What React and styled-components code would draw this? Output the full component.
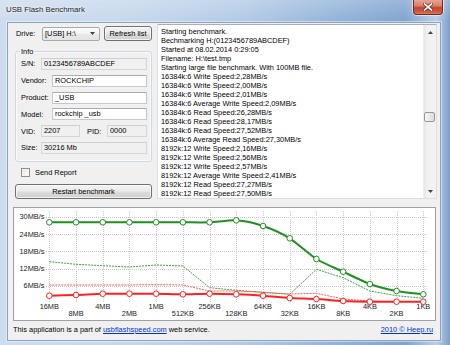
import React from 'react';
import styled, { createGlobalStyle } from 'styled-components';

const FONT = `"Liberation Sans", Arial, sans-serif`;

const Global = createGlobalStyle`
  html, body { margin: 0; padding: 0; width: 450px; height: 345px; overflow: hidden; background: #fff; }
  #root { width: 450px; height: 345px; }
`;

const Window = styled.div`
  width: 450px;
  height: 345px;
  box-sizing: border-box;
  display: flex;
  flex-direction: column;
  font-family: ${FONT};
  color: #000;
  background:
    linear-gradient(180deg, rgba(255,255,255,0.22) 0px, rgba(255,255,255,0) 22px),
    linear-gradient(90deg, #cddcee 0%, #c4d7ec 30%, #b0c9e5 55%, #8eafd7 78%, #7fa3cf 90%, #b9cfe8 97%, #7d9ecb 100%);
`;

const TitleBar = styled.div`
  height: 22px;
  flex: none;
  display: flex;
  align-items: flex-start;
  padding: 0 7px 0 6px;
`;

const Title = styled.div`
  margin-top: 5px;
  font-size: 7.8px;
  line-height: 10px;
  color: #1b1b1b;
  text-shadow: 0 0 5px rgba(255,255,255,0.95), 0 0 2px rgba(255,255,255,0.9);
`;

const CloseButton = styled.div`
  margin-left: auto;
  width: 30px;
  height: 15px;
  box-sizing: border-box;
  border: 1px solid #6d2b24;
  border-top: none;
  border-radius: 0 0 4px 4px;
  background: linear-gradient(180deg, #e8a494 0%, #d98170 40%, #c5452f 55%, #cf5b41 85%, #dd7b5f 100%);
  box-shadow: 0 0 0 1px rgba(255,255,255,0.55);
  display: flex;
  align-items: center;
  justify-content: center;
`;

const Client = styled.div`
  flex: 1;
  min-height: 0;
  margin: 0 9px 4px 7px;
  background: #f0f0f0;
  border: 1px solid #8aa1bf;
  box-shadow: 0 0 0 1px rgba(255,255,255,0.45);
  display: flex;
  flex-direction: column;
  font-size: 7.4px;
`;

const TopSection = styled.div`
  display: flex;
  gap: 5px;
  padding: 1px 3px 0 7px;
  height: 175px;
  flex: none;
`;

const LeftCol = styled.div`
  width: 137px;
  flex: none;
  display: flex;
  flex-direction: column;
`;

const DriveRow = styled.div`
  display: flex;
  align-items: center;
  height: 16px;
  margin-top: 2px;
`;

const DriveLabel = styled.span`
  width: 27px;
  padding-left: 1px;
  box-sizing: border-box;
  flex: none;
`;

const Combo = styled.div`
  width: 58px;
  height: 14px;
  box-sizing: border-box;
  flex: none;
  border: 1px solid #a9a9a9;
  border-radius: 2px;
  background: linear-gradient(180deg, #fcfcfc 0%, #f2f2f2 50%, #e9e9e9 51%, #e4e4e4 100%);
  display: flex;
  align-items: center;
  padding: 0 4px 0 2px;
  justify-content: space-between;
`;

const WinButton = styled.div`
  width: ${p => p.$w}px;
  height: 15px;
  box-sizing: border-box;
  flex: none;
  margin-left: ${p => p.$ml || 0}px;
  margin-top: ${p => p.$mt || 0}px;
  border: 1px solid #707070;
  border-radius: 3px;
  background: linear-gradient(180deg, #f2f2f2 0%, #ebebeb 48%, #dddddd 52%, #cfcfcf 100%);
  box-shadow: inset 0 0 0 1px rgba(255,255,255,0.7);
  display: flex;
  align-items: center;
  justify-content: center;
`;

const GroupBox = styled.fieldset`
  margin: 6px 0 0 0;
  padding: 0 4px 5px 5px;
  border: 1px solid #d0d7de;
  border-radius: 3px;
  box-shadow: inset 0 0 0 1px rgba(255,255,255,0.7);
  min-width: 0;
`;

const Legend = styled.legend`
  padding: 0 1px;
  margin-left: -1px;
  line-height: 8px;
  font-size: 7.4px;
`;

const InfoRow = styled.div`
  display: flex;
  align-items: center;
  height: 16.8px;
`;

const FieldLabel = styled.span`
  width: ${p => p.$w}px;
  margin-left: ${p => p.$ml || 0}px;
  flex: none;
`;

const Field = styled.div`
  width: ${p => p.$w}px;
  height: 12px;
  box-sizing: border-box;
  flex: none;
  border: 1px solid ${p => (p.$ro ? '#d6d6d6' : '#c3c7cf')};
  border-top-color: ${p => (p.$ro ? '#cfcfcf' : '#abadb3')};
  background: ${p => (p.$ro ? '#f0f0f0' : '#ffffff')};
  padding-left: 2px;
  line-height: 10px;
  white-space: nowrap;
  overflow: hidden;
`;

const CheckRow = styled.div`
  display: flex;
  align-items: center;
  height: 13px;
  margin-top: 4px;
`;

const CheckBox = styled.div`
  width: 9px;
  height: 9px;
  box-sizing: border-box;
  margin-left: 6px;
  border: 1px solid #8e8f8f;
  background: linear-gradient(135deg, #dcdcdc 0%, #f4f4f4 60%, #ffffff 100%);
  box-shadow: inset 0 0 0 1px #f4f4f4;
`;

const CheckLabel = styled.span`
  margin-left: 5px;
`;

const TextBox = styled.div`
  flex: 1;
  min-width: 0;
  margin-top: 0;
  height: 175px;
  box-sizing: border-box;
  border: 1px solid #dbdfe6;
  border-top-color: #abadb3;
  background: #fff;
  display: flex;
`;

const LogText = styled.div`
  flex: 1;
  min-width: 0;
  padding: 2px 0 0 3px;
  line-height: 9px;
  white-space: pre;
  overflow: hidden;
`;

const ScrollBar = styled.div`
  width: 12px;
  flex: none;
  display: flex;
  flex-direction: column;
  background: linear-gradient(90deg, #e6e6e6 0%, #f2f2f2 30%, #f2f2f2 100%);
  border-left: 1px solid #ececec;
`;

const ScrollArrow = styled.div`
  height: 14px;
  flex: none;
  display: flex;
  align-items: center;
  justify-content: center;
`;

const ScrollTrack = styled.div`
  flex: 1;
`;

const Thumb = styled.div`
  margin: 73px 1px 0 0;
  height: 10px;
  box-sizing: border-box;
  border: 1px solid #979797;
  border-radius: 2px;
  background: linear-gradient(90deg, #f5f5f5 0%, #e9e9e9 50%, #dcdcdc 100%);
`;

const ChartPanel = styled.div`
  margin: 8px 4px 0 5px;
  height: 114px;
  flex: none;
  box-sizing: border-box;
  border: 1px solid #a0a0a0;
  background: #ffffff;
  display: flex;
`;

const Footer = styled.div`
  height: 16px;
  flex: none;
  display: flex;
  align-items: center;
  justify-content: space-between;
  padding: 0 7px 0 5px;
`;

const Link = styled.a`
  color: #0033cc;
  text-decoration: underline;
`;

const logLines = [
  'Starting benchmark.',
  'Bechmarking H:(0123456789ABCDEF)',
  'Started at 08.02.2014 0:29:05',
  'Filename: H:\\test.tmp',
  'Starting large file benchmark. With 100MB file.',
  '16384k:6 Write Speed:2,28MB/s',
  '16384k:6 Write Speed:2,00MB/s',
  '16384k:6 Write Speed:2,01MB/s',
  '16384k:6 Average Write Speed:2,09MB/s',
  '16384k:6 Read Speed:26,28MB/s',
  '16384k:6 Read Speed:28,17MB/s',
  '16384k:6 Read Speed:27,52MB/s',
  '16384k:6 Average Read Speed:27,30MB/s',
  '8192k:12 Write Speed:2,16MB/s',
  '8192k:12 Write Speed:2,56MB/s',
  '8192k:12 Write Speed:2,57MB/s',
  '8192k:12 Average Write Speed:2,41MB/s',
  '8192k:12 Read Speed:27,27MB/s',
  '8192k:12 Read Speed:27,50MB/s',
];

const XS = Array.from({ length: 15 }, (_, i) => 49.3 + i * 26.714);
const xLabels = ['16MB', '8MB', '4MB', '2MB', '1MB', '512KB', '256KB', '128KB', '64KB', '32KB', '16KB', '8KB', '4KB', '2KB', '1KB'];
const yOf = v => 303 - v * 2.875;
const yTicks = [30, 24, 18, 12, 6];

const greenY = [222.3, 222.3, 222.3, 222.3, 222.3, 222.3, 222.3, 220.3, 226, 238.3, 259, 271.7, 284, 291, 294.3];
const redY = [295.7, 295, 293.7, 293.7, 293.7, 294.3, 293.7, 294.3, 295.7, 298, 299, 301, 301.7, 301.7, 301.7];
const greenDash = [261.7, 264.3, 265.7, 267, 265, 266, 287.7, 290.3, 292.3, 294.3, 269.3, 277.7, 291, 295.7, 298.3];
const redDash = [285, 285, 285, 285, 284.6, 285, 291, 291, 292.3, 294, 293.3, 299, 301, 301.5, 301.7];

function smoothPath(ys) {
  const pts = ys.map((y, i) => [XS[i], y]);
  let d = `M${pts[0][0]},${pts[0][1]}`;
  const k = 0.12;
  for (let i = 0; i < pts.length - 1; i++) {
    const p0 = pts[Math.max(0, i - 1)];
    const p1 = pts[i];
    const p2 = pts[i + 1];
    const p3 = pts[Math.min(pts.length - 1, i + 2)];
    const c1x = p1[0] + (p2[0] - p0[0]) * k;
    const c1y = p1[1] + (p2[1] - p0[1]) * k;
    const c2x = p2[0] - (p3[0] - p1[0]) * k;
    const c2y = p2[1] - (p3[1] - p1[1]) * k;
    d += ` C${c1x.toFixed(2)},${c1y.toFixed(2)} ${c2x.toFixed(2)},${c2y.toFixed(2)} ${p2[0].toFixed(2)},${p2[1]}`;
  }
  return d;
}

const linePath = ys => ys.map((y, i) => `${i ? 'L' : 'M'}${XS[i].toFixed(2)},${y}`).join(' ');

function Chart() {
  return (
    <svg width="421" height="112" viewBox="14 208 421 112" style={{ display: 'block' }}>
      <g stroke="#c9c9c9" strokeWidth="1" strokeDasharray="1 1" shapeRendering="crispEdges">
        {XS.map((x, i) => (
          <line key={`v${i}`} x1={Math.round(x) + 0.5} y1="211" x2={Math.round(x) + 0.5} y2="303" />
        ))}
        {yTicks.map(v => (
          <line key={`h${v}`} x1="46" y1={Math.round(yOf(v)) + 0.5} x2="428" y2={Math.round(yOf(v)) + 0.5} />
        ))}
      </g>
      <g fontFamily={FONT} fontSize="7.4" fill="#1a1a1a">
        {yTicks.map(v => (
          <text key={`yl${v}`} x="44.5" y={yOf(v) + 2.7} textAnchor="end">{v}MB/s</text>
        ))}
        {xLabels.map((l, i) => (
          <text key={`xl${i}`} x={XS[i]} y={(i % 2 ? 313.3 : 306.3) + 2.7} textAnchor="middle">{l}</text>
        ))}
      </g>
      <path d={linePath(greenDash)} fill="none" stroke="#3f9f3f" strokeWidth="1" strokeDasharray="2 1" />
      <path d={linePath(redDash)} fill="none" stroke="#ff5a5a" strokeWidth="1" strokeDasharray="2 1" />
      <path d={smoothPath(redY)} fill="none" stroke="#ff2020" strokeWidth="2" />
      <path d={smoothPath(greenY)} fill="none" stroke="#1f8f1f" strokeWidth="2" />
      {XS.map((x, i) => (
        <circle key={`rc${i}`} cx={x} cy={redY[i]} r="2.8" fill="#fff" stroke="#ff2020" strokeWidth="1" />
      ))}
      {XS.map((x, i) => (
        <circle key={`gc${i}`} cx={x} cy={greenY[i]} r="2.8" fill="#fff" stroke="#1f8f1f" strokeWidth="1" />
      ))}
    </svg>
  );
}

const Tri = ({ down }) => (
  <svg width="5" height="3" viewBox="0 0 5 3">
    <path d={down ? 'M0,0 L5,0 L2.5,3 Z' : 'M0,3 L5,3 L2.5,0 Z'} fill="#404040" />
  </svg>
);

export default function App() {
  return (
    <>
      <Global />
      <Window>
        <TitleBar>
          <Title>USB Flash Benchmark</Title>
          <CloseButton>
            <svg width="10" height="8" viewBox="0 0 10 8">
              <path d="M1.5,1 L8.5,7 M8.5,1 L1.5,7" stroke="#5a1a14" strokeWidth="3" strokeLinecap="square" />
              <path d="M1.5,1 L8.5,7 M8.5,1 L1.5,7" stroke="#ffffff" strokeWidth="1.7" strokeLinecap="square" />
            </svg>
          </CloseButton>
        </TitleBar>
        <Client>
          <TopSection>
            <LeftCol>
              <DriveRow>
                <DriveLabel>Drive:</DriveLabel>
                <Combo>
                  <span>[USB] H:\</span>
                  <Tri down />
                </Combo>
                <WinButton $w={48} $ml={4}>Refresh list</WinButton>
              </DriveRow>
              <GroupBox>
                <Legend>Info</Legend>
                <InfoRow>
                  <FieldLabel $w={20}>S/N:</FieldLabel>
                  <Field $w={106} $ro>0123456789ABCDEF</Field>
                </InfoRow>
                <InfoRow>
                  <FieldLabel $w={31}>Vendor:</FieldLabel>
                  <Field $w={95}>ROCKCHIP</Field>
                </InfoRow>
                <InfoRow>
                  <FieldLabel $w={31}>Product:</FieldLabel>
                  <Field $w={95}>_USB</Field>
                </InfoRow>
                <InfoRow>
                  <FieldLabel $w={31}>Model:</FieldLabel>
                  <Field $w={95}>rockchip _usb</Field>
                </InfoRow>
                <InfoRow>
                  <FieldLabel $w={20}>VID:</FieldLabel>
                  <Field $w={39} $ro>2207</Field>
                  <FieldLabel $w={20} $ml={7}>PID:</FieldLabel>
                  <Field $w={40} $ro>0000</Field>
                </InfoRow>
                <InfoRow>
                  <FieldLabel $w={20}>Size:</FieldLabel>
                  <Field $w={106} $ro>30216 Mb</Field>
                </InfoRow>
              </GroupBox>
              <CheckRow>
                <CheckBox />
                <CheckLabel>Send Report</CheckLabel>
              </CheckRow>
              <WinButton $w={137} $mt={5}>Restart benchmark</WinButton>
            </LeftCol>
            <TextBox>
              <LogText>{logLines.join('\n')}</LogText>
              <ScrollBar>
                <ScrollArrow><Tri /></ScrollArrow>
                <ScrollTrack>
                  <Thumb />
                </ScrollTrack>
                <ScrollArrow><Tri down /></ScrollArrow>
              </ScrollBar>
            </TextBox>
          </TopSection>
          <ChartPanel>
            <Chart />
          </ChartPanel>
          <Footer>
            <span>
              This application is a part of <Link href="#">usbflashspeed.com</Link> web service.
            </span>
            <Link href="#">2010 © Heep.ru</Link>
          </Footer>
        </Client>
      </Window>
    </>
  );
}
